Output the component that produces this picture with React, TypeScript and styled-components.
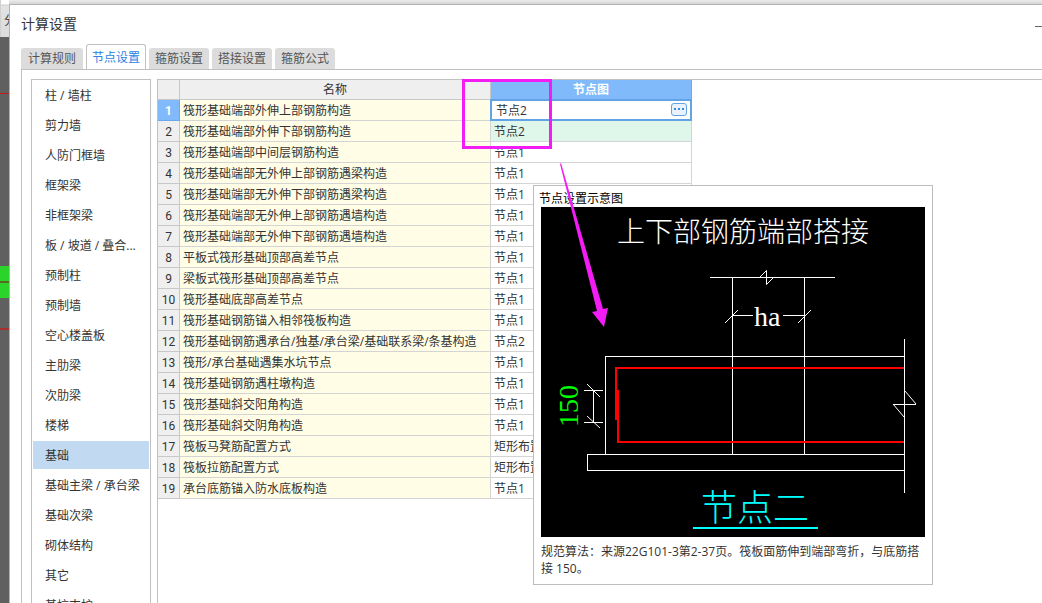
import React, { useState } from 'react';
import styled, { createGlobalStyle, css } from 'styled-components';

const Global = createGlobalStyle`
  *, *::before, *::after { box-sizing: border-box; }
  html, body, #root { height: 100%; }
  body {
    margin: 0;
    overflow: hidden;
    background: #e6e6e6;
    color: #333;
    font: 12px/18px "Open Sans", "Noto Sans CJK SC", sans-serif;
  }
  button, input { font: inherit; color: inherit; }
`;

const Screen = styled.div`
  display: flex;
  height: 100%;
  overflow: hidden;
`;

const Backdrop = styled.div`
  flex: none;
  width: 9px;
  display: flex;
  flex-direction: column;
  overflow: hidden;
`;

const BackdropBar = styled.div`
  flex: none;
  height: 37px;
  padding: 12px 0 0 3px;
  border-left: 1px solid #d0d0d0;
  background: linear-gradient(#fff 0 4px, #d0d0d0 5px, #e2e2e2 6px, #dcdcdc);
  white-space: nowrap;
  color: #444;
`;

const BackdropCanvas = styled.svg`
  flex: none;
  display: block;
`;

const Main = styled.div`
  flex: 1;
  min-width: 0;
  display: flex;
  flex-direction: column;
`;

const TopStrip = styled.div`
  flex: none;
  height: 4px;
  background: linear-gradient(#ececec, #d4d4d4);
`;

const Dialog = styled.section`
  flex: 1;
  min-height: 0;
  display: flex;
  flex-direction: column;
  padding-left: 11px;
  border: solid #b4b4b4;
  border-width: 1px 0 0 1px;
  background: #fff;
`;

const TitleBar = styled.header`
  flex: none;
  display: flex;
  align-items: center;
  justify-content: space-between;
  height: 39px;
`;

const Title = styled.h1`
  margin: 0;
  padding-bottom: 2px;
  font-size: 14px;
  font-weight: 400;
`;

const MinimizeButton = styled.button`
  width: 7px;
  height: 20px;
  padding: 4px 0 0;
  border: 0;
  background: none;
  &::before {
    content: "";
    display: block;
    height: 1px;
    background: #666;
  }
`;

const Tabs = styled.nav`
  flex: none;
  display: flex;
  align-items: flex-end;
  gap: 3px;
  height: 26px;
  margin-bottom: -1px;
`;

const Tab = styled.button<{ $active?: boolean }>`
  height: 21px;
  margin-bottom: 1px;
  padding: 0 6px;
  border: 0;
  border-radius: 3px 3px 0 0;
  background: #dcdcdc;
  color: #555;
  line-height: 20px;
  &:first-child { padding: 0 7px; }
  ${p => p.$active && css`
    height: 26px;
    margin-bottom: 0;
    padding: 0 5px;
    border: 1px solid #c0c0c0;
    border-bottom: 0;
    background: #fff;
    color: #2a82e4;
    line-height: 24px;
  `}
`;

const Panel = styled.div`
  flex: 1;
  min-height: 0;
  display: flex;
  gap: 6px;
  padding: 9px 0 0 9px;
  border: solid #c0c0c0;
  border-width: 1px 0 0 1px;
`;

const Categories = styled.ul`
  flex: none;
  width: 120px;
  margin: 0;
  padding: 1px;
  border: solid #c0c0c0;
  border-width: 1px 1px 0;
  list-style: none;
  overflow: hidden;
`;

const Category = styled.button<{ $selected: boolean }>`
  display: block;
  width: 100%;
  height: 28px;
  margin-bottom: 2px;
  padding: 2px 0 0 12px;
  border: 0;
  background: ${p => (p.$selected ? '#c1d9f1' : 'none')};
  text-align: left;
  white-space: nowrap;
`;

const Grid = styled.div`
  position: relative;
  flex: 1;
  min-width: 0;
  border: solid #c0c0c0;
  border-width: 1px 0 0 1px;
`;

const Table = styled.table`
  width: 534px;
  table-layout: fixed;
  border-collapse: separate;
  border-spacing: 0;
`;

const HeadCell = styled.th<{ $active?: boolean }>`
  height: 20px;
  padding: 1px 0 0;
  border: solid ${p => (p.$active ? '#69a8ea' : '#c8c8c8')};
  border-width: 0 1px 1px 0;
  background: ${p => (p.$active ? '#80bafa' : '#efefef')};
  color: ${p => (p.$active ? '#fff' : '#333')};
  font-weight: ${p => (p.$active ? 700 : 400)};
`;

const NumberCell = styled.th<{ $active: boolean }>`
  height: 21px;
  padding: 2px 0 0;
  border: solid ${p => (p.$active ? '#69a8ea' : '#c8c8c8')};
  border-width: 0 1px 1px 0;
  background: ${p => (p.$active ? '#80bafa' : '#efefef')};
  color: ${p => (p.$active ? '#fff' : '#333')};
  font-family: Roboto, sans-serif;
  font-size: 12px;
  font-weight: ${p => (p.$active ? 700 : 400)};
`;

const Cell = styled.td<{ $tone: 'name' | 'plain' | 'mint' }>`
  height: 21px;
  padding: 2px 0 0 3px;
  border: solid #d4d4d4;
  border-width: 0 1px 1px 0;
  background: ${p => ({ name: '#fffde6', plain: '#fff', mint: '#dff6eb' })[p.$tone]};
  white-space: nowrap;
  overflow: hidden;
`;

const EditCell = styled.td`
  padding: 0;
  height: 21px;
`;

const Editor = styled.div`
  display: flex;
  align-items: center;
  height: 22px;
  margin: -1px 0 0 -1px;
  padding: 0 3px 0 4px;
  border: 2px solid #62a3e6;
  background: #fff;
`;

const EditorInput = styled.input`
  flex: 1;
  min-width: 0;
  height: 18px;
  padding: 2px 0 0;
  border: 0;
  outline: 0;
  background: none;
`;

const MoreButton = styled.button`
  display: flex;
  align-items: center;
  justify-content: center;
  gap: 2px;
  width: 16px;
  height: 13px;
  margin-bottom: 1px;
  padding: 0 0 1px;
  border: 1px solid #62a3e6;
  border-radius: 3px;
  background: #eaf3fd;
`;

const Dot = styled.i`
  width: 2px;
  height: 2px;
  background: #3d87d8;
`;

const Highlight = styled.div`
  position: absolute;
  left: 304px;
  top: -1px;
  width: 90px;
  height: 70px;
  border: 3px solid #f41cf4;
`;

const Arrow = styled.svg`
  position: absolute;
  left: 400px;
  top: 82px;
`;

const Popup = styled.figure`
  position: absolute;
  left: 375px;
  top: 105px;
  width: 400px;
  height: 400px;
  margin: 0;
  padding: 4px 7px;
  border: 1px solid #bdbdbd;
  background: #fff;
`;

const PopupTitle = styled.div`
  height: 17px;
  margin-left: -2px;
  color: #000;
`;

const Drawing = styled.svg`
  display: block;
  background: #000;
`;

const Caption = styled.figcaption`
  width: 386px;
  padding-top: 6px;
  line-height: 17px;
  word-break: break-all;
`;

const tabs = ['计算规则', '节点设置', '箍筋设置', '搭接设置', '箍筋公式'];

const categories = [
  '柱 / 墙柱', '剪力墙', '人防门框墙', '框架梁', '非框架梁', '板 / 坡道 / 叠合...',
  '预制柱', '预制墙', '空心楼盖板', '主肋梁', '次肋梁', '楼梯', '基础',
  '基础主梁 / 承台梁', '基础次梁', '砌体结构', '其它', '基坑支护',
];

const rows: [string, string][] = [
  ['筏形基础端部外伸上部钢筋构造', '节点2'],
  ['筏形基础端部外伸下部钢筋构造', '节点2'],
  ['筏形基础端部中间层钢筋构造', '节点1'],
  ['筏形基础端部无外伸上部钢筋遇梁构造', '节点1'],
  ['筏形基础端部无外伸下部钢筋遇梁构造', '节点1'],
  ['筏形基础端部无外伸上部钢筋遇墙构造', '节点1'],
  ['筏形基础端部无外伸下部钢筋遇墙构造', '节点1'],
  ['平板式筏形基础顶部高差节点', '节点1'],
  ['梁板式筏形基础顶部高差节点', '节点1'],
  ['筏形基础底部高差节点', '节点1'],
  ['筏形基础钢筋锚入相邻筏板构造', '节点1'],
  ['筏形基础钢筋遇承台/独基/承台梁/基础联系梁/条基构造', '节点2'],
  ['筏形/承台基础遇集水坑节点', '节点1'],
  ['筏形基础钢筋遇柱墩构造', '节点1'],
  ['筏形基础斜交阳角构造', '节点1'],
  ['筏形基础斜交阴角构造', '节点1'],
  ['筏板马凳筋配置方式', '矩形布置'],
  ['筏板拉筋配置方式', '矩形布置'],
  ['承台底筋锚入防水底板构造', '节点1'],
];

function NodeDrawing() {
  const song = '"Liberation Serif", "Noto Sans CJK SC", serif';
  return (
    <Drawing width="384" height="330" viewBox="0 0 384 330" role="img" aria-label="节点二">
      <text x="76" y="35" fill="#fff" fontSize="28" fontWeight="300" fontFamily={song}>上下部钢筋端部搭接</text>
      <g fill="none" stroke="#fff" shapeRendering="crispEdges">
        <path d="M169 70.5H294M191.500 70V247M263.500 70V247" />
        <path d="M191 108.500H212M242 108.500H263" />
        <path d="M363 149.500H64.500V247M46.500 247.500H363M46.500 247V263.500H363M363.500 132V286" />
        <path d="M43 183.500H62M43 215.500H62M52.500 183V216" />
        <path d="M352 197.500H375" />
      </g>
      <g fill="none" stroke="#fff">
        <path d="M219 70L225.500 63.500V77.500L232 71" />
        <path d="M184 116L197 103M257 116L270 103" />
        <path d="M46 177L59 190M46 209L59 221" />
        <path d="M364 184L375 197M352 197L363 210" />
      </g>
      <path
        d="M363 161H75V213M77 183V235H363"
        fill="none"
        stroke="#f00"
        strokeWidth="2"
        shapeRendering="crispEdges"
      />
      <text x="213" y="119" fill="#fff" fontSize="28" fontFamily={song}>ha</text>
      <text transform="translate(37 220) rotate(-90)" fill="#0f0" fontSize="28" fontFamily={song}>150</text>
      <text x="160" y="314" fill="#0ff" fontSize="36" fontWeight="300" fontFamily={song}>节点二</text>
      <path d="M152 321H277" stroke="#0ff" strokeWidth="2" />
    </Drawing>
  );
}

export default function App() {
  const [tab, setTab] = useState(1);
  const [category, setCategory] = useState(12);
  const [node, setNode] = useState('节点2');
  return (
    <>
      <Global />
      <Screen>
        <Backdrop>
          <BackdropBar>分</BackdropBar>
          <BackdropCanvas width="9" height="1200">
            <rect width="9" height="1200" fill="#606060" />
            <rect y="56" width="9" height="1" fill="#c01818" />
            <rect y="229" width="9" height="32" fill="#2ad42a" />
            <rect y="244" width="9" height="2" fill="#5a6a1c" />
            <rect y="291" width="9" height="2" fill="#a83030" />
          </BackdropCanvas>
        </Backdrop>
        <Main>
          <TopStrip />
          <Dialog>
            <TitleBar>
              <Title>计算设置</Title>
              <MinimizeButton aria-label="最小化" />
            </TitleBar>
            <Tabs>
              {tabs.map((label, i) => (
                <Tab key={label} $active={i === tab} onClick={() => setTab(i)}>{label}</Tab>
              ))}
            </Tabs>
            <Panel>
              <Categories>
                {categories.map((label, i) => (
                  <li key={label}>
                    <Category $selected={i === category} onClick={() => setCategory(i)}>{label}</Category>
                  </li>
                ))}
              </Categories>
              <Grid>
                <Table>
                  <colgroup>
                    <col width="22" />
                    <col width="311" />
                    <col width="201" />
                  </colgroup>
                  <thead>
                    <tr>
                      <HeadCell aria-label="序号" />
                      <HeadCell scope="col">名称</HeadCell>
                      <HeadCell scope="col" $active>节点图</HeadCell>
                    </tr>
                  </thead>
                  <tbody>
                    {rows.map(([name, value], i) => (
                      <tr key={name}>
                        <NumberCell scope="row" $active={i === 0}>{i + 1}</NumberCell>
                        <Cell $tone="name">{name}</Cell>
                        {i === 0 ? (
                          <EditCell>
                            <Editor>
                              <EditorInput aria-label="节点图" value={node} onChange={e => setNode(e.target.value)} />
                              <MoreButton aria-label="更多"><Dot /><Dot /><Dot /></MoreButton>
                            </Editor>
                          </EditCell>
                        ) : (
                          <Cell $tone={i === 1 ? 'mint' : 'plain'}>{value}</Cell>
                        )}
                      </tr>
                    ))}
                  </tbody>
                </Table>
                <Popup>
                  <PopupTitle>节点设置示意图</PopupTitle>
                  <NodeDrawing />
                  <Caption>规范算法：来源22G101-3第2-37页。筏板面筋伸到端部弯折，与底筋搭接 150。</Caption>
                </Popup>
                <Highlight />
                <Arrow width="56" height="168" viewBox="0 0 56 168" aria-hidden="true">
                  <path d="M3 1L45 147L50 146L46 165L34 150L39 149L2 2Z" fill="#f41cf4" />
                </Arrow>
              </Grid>
            </Panel>
          </Dialog>
        </Main>
      </Screen>
    </>
  );
}
